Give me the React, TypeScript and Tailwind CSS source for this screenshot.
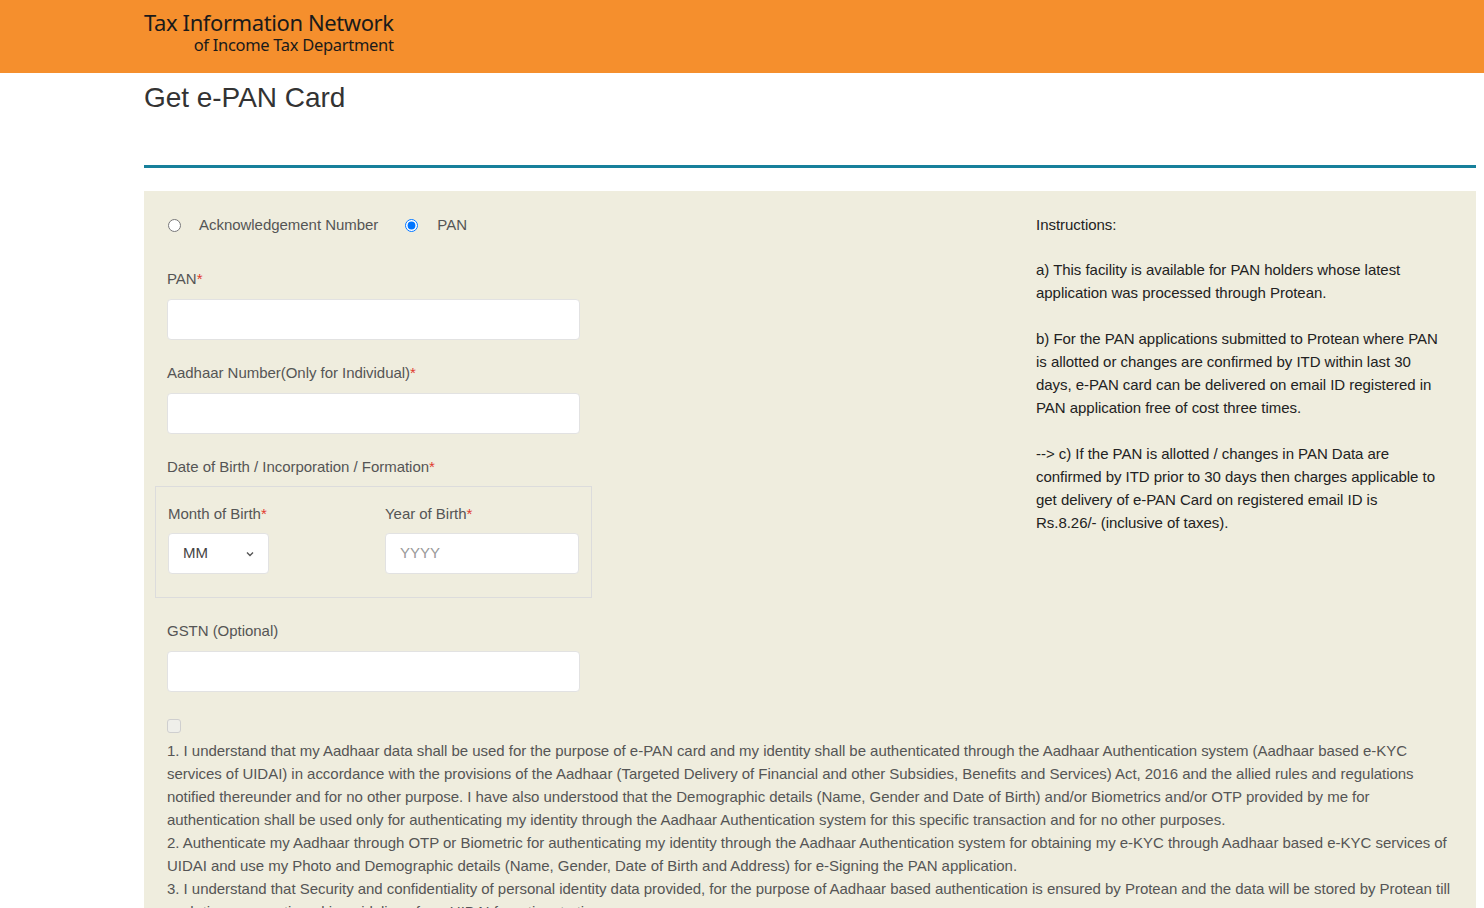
import React from "react";

const Req = () => <span className="text-[#e03a2f]">*</span>;

const Label = ({ children }: { children: React.ReactNode }) => (
  <div className="text-[15px] leading-[20px] text-[#555]">{children}</div>
);

const Field = () => (
  <div className="mt-[10px] h-[41px] w-[413px] rounded-[4px] border border-[#e2e2e2] bg-white" />
);

export default function App() {
  return (
    <div className="min-h-[908px] bg-white tracking-[-0.035px]" style={{ fontFamily: '"Liberation Sans", Arial, sans-serif' }}>
      <header className="h-[73px] bg-[#f58f2d]">
        <div className="ml-[144px] flex w-fit flex-col items-end whitespace-nowrap pt-[9px] text-[#1a1a1a]" style={{ fontFamily: '"Noto Sans", "Open Sans", sans-serif' }}>
          <div className="text-[22px] leading-[26px] tracking-[-0.4px]">Tax Information Network</div>
          <div className="text-[16.5px] leading-[20px] tracking-[-0.3px]">of Income Tax Department</div>
        </div>
      </header>

      <div className="ml-[144px] w-[1332px]">
        <h1 className="mt-[10px] text-[28px] leading-[30px] text-[#333]">Get e-PAN Card</h1>
        <div className="mt-[52px] h-[3px] bg-[#17809b]" />

        <div className="mt-[23px] grid grid-cols-[892px_1fr] bg-[#efedde] pb-[20px]">
          <div className="pl-[23px] pt-[24px]">
            <div className="flex h-[20px] items-center text-[15px] text-[#555]">
              <input type="radio" name="t" className="ml-[1px] h-[13px] w-[13px]" readOnly />
              <span className="ml-[18px]">Acknowledgement Number</span>
              <input type="radio" name="t" defaultChecked className="ml-[27px] h-[13px] w-[13px]" />
              <span className="ml-[19px]">PAN</span>
            </div>

            <div className="mt-[34px]"><Label>PAN<Req /></Label></div>
            <Field />

            <div className="mt-[23px]"><Label>Aadhaar Number(Only for Individual)<Req /></Label></div>
            <Field />

            <div className="mt-[23px]"><Label>Date of Birth / Incorporation / Formation<Req /></Label></div>
            <div className="-ml-[12px] mt-[9px] w-[437px] border border-[#dcdcdc] pb-[23px] pl-[12px] pt-[17px]">
              <div className="flex gap-[116px]">
                <div>
                  <Label>Month of Birth<Req /></Label>
                  <div className="mt-[9px] flex h-[41px] w-[101px] items-center justify-between rounded-[4px] border border-[#e2e2e2] bg-white pl-[14px] pr-[13px] text-[15px] text-[#444]">
                    <span>MM</span>
                    <svg width="10" height="10" viewBox="0 0 10 10" fill="none" stroke="#555" strokeWidth="1.4">
                      <path d="M2 3.5 L5 6.5 L8 3.5" />
                    </svg>
                  </div>
                </div>
                <div>
                  <Label>Year of Birth<Req /></Label>
                  <div className="mt-[9px] flex h-[41px] w-[194px] items-center rounded-[4px] border border-[#e2e2e2] bg-white pl-[14px] text-[15px] text-[#999]">
                    YYYY
                  </div>
                </div>
              </div>
            </div>

            <div className="mt-[23px]"><Label>GSTN (Optional)</Label></div>
            <Field />

            <div className="mt-[27px] h-[14px] w-[14px] rounded-[3px] border border-[#cfcfcf] bg-[#efefea]" />
          </div>

          <div className="pr-[36px] pt-[22px] text-[15px] leading-[23px] text-[#222]">
            <p>Instructions:</p>
            <p className="mt-[22px]">a) This facility is available for PAN holders whose latest application was processed through Protean.</p>
            <p className="mt-[23px]">b) For the PAN applications submitted to Protean where PAN is allotted or changes are confirmed by ITD within last 30 days, e-PAN card can be delivered on email ID registered in PAN application free of cost three times.</p>
            <p className="mt-[23px]">--&gt; c) If the PAN is allotted / changes in PAN Data are confirmed by ITD prior to 30 days then charges applicable to get delivery of e-PAN Card on registered email ID is Rs.8.26/- (inclusive of taxes).</p>
          </div>

          <div className="col-span-2 mt-[6px] pl-[23px] pr-[24px] text-[15px] leading-[23px] text-[#555]">
            <p>
              1. I understand that my Aadhaar data shall be used for the purpose of e-PAN card and my identity shall be authenticated through the Aadhaar Authentication system (Aadhaar based e-KYC services of UIDAI) in accordance with the provisions of the Aadhaar (Targeted Delivery of Financial and other Subsidies, Benefits and Services) Act, 2016 and the allied rules and regulations notified thereunder and for no other purpose. I have also understood that the Demographic details (Name, Gender and Date of Birth) and/or Biometrics and/or OTP provided by me for authentication shall be used only for authenticating my identity through the Aadhaar Authentication system for this specific transaction and for no other purposes.
            </p>
            <p>
              2. Authenticate my Aadhaar through OTP or Biometric for authenticating my identity through the Aadhaar Authentication system for obtaining my e-KYC through Aadhaar based e-KYC services of UIDAI and use my Photo and Demographic details (Name, Gender, Date of Birth and Address) for e-Signing the PAN application.
            </p>
            <p>
              3. I understand that Security and confidentiality of personal identity data provided, for the purpose of Aadhaar based authentication is ensured by Protean and the data will be stored by Protean till such time as mentioned in guidelines from UIDAI from time to time.
            </p>
          </div>
        </div>
      </div>
    </div>
  );
}
